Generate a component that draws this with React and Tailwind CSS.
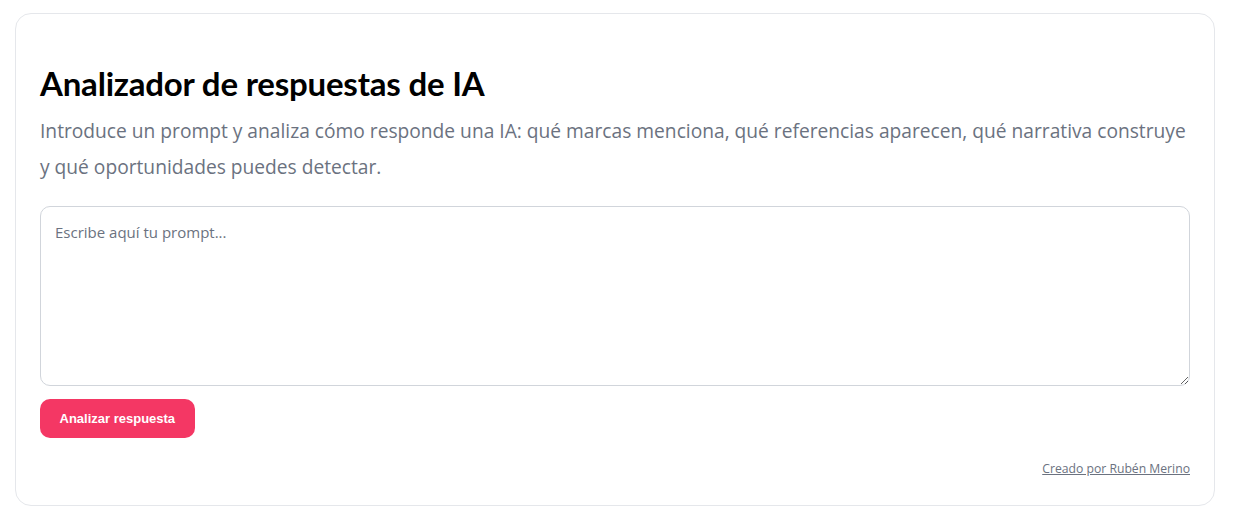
import React from 'react';

function App() {
  return (
    <div className="min-h-screen bg-white pl-[15px] pr-[20px] pt-[13px] font-['Lato',sans-serif]">
      <div className="rounded-2xl border border-[#e5e7eb] bg-white px-[24px] pt-[47px] pb-[27px]">
        <h1 className="text-[33px] font-bold leading-[44px] text-black tracking-[-0.2px]">
          Analizador de respuestas de IA
        </h1>
        <p className="mt-[8px] font-['Open_Sans',sans-serif] text-[19.2px] leading-[36px] text-[#6b7280]">
          Introduce un prompt y analiza cómo responde una IA: qué marcas menciona, qué referencias aparecen, qué narrativa construye y qué oportunidades puedes detectar.
        </p>

        {/* Prompt */}
        <textarea
          placeholder="Escribe aquí tu prompt..."
          className="mt-[21px] block h-[180px] w-full rounded-[10px] border border-[#d1d5db] px-[14px] py-[14px] font-['Open_Sans',sans-serif] text-[15px] text-[#374151] placeholder:text-[#6b7280] outline-none"
        />

        <button className="mt-[13px] h-[39px] rounded-[10px] bg-[#f43764] px-[19.5px] font-['Liberation_Sans',sans-serif] text-[13px] font-bold text-white">
          Analizar respuesta
        </button>

        <div className="mt-[22px] flex justify-end">
          <a href="#" className="font-['Open_Sans',sans-serif] text-[12.2px] text-[#6b7280] underline">
            Creado por Rubén Merino
          </a>
        </div>
      </div>
    </div>
  );
}

export default App;
